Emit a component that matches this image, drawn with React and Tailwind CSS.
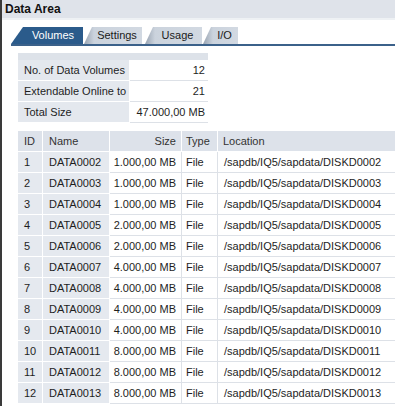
const rows = [
  [1, "DATA0002", "1.000,00 MB", "DISKD0002"],
  [2, "DATA0003", "1.000,00 MB", "DISKD0003"],
  [3, "DATA0004", "1.000,00 MB", "DISKD0004"],
  [4, "DATA0005", "2.000,00 MB", "DISKD0005"],
  [5, "DATA0006", "2.000,00 MB", "DISKD0006"],
  [6, "DATA0007", "4.000,00 MB", "DISKD0007"],
  [7, "DATA0008", "4.000,00 MB", "DISKD0008"],
  [8, "DATA0009", "4.000,00 MB", "DISKD0009"],
  [9, "DATA0010", "4.000,00 MB", "DISKD0010"],
  [10, "DATA0011", "8.000,00 MB", "DISKD0011"],
  [11, "DATA0012", "8.000,00 MB", "DISKD0012"],
  [12, "DATA0013", "8.000,00 MB", "DISKD0013"],
];

const summary = [
  ["No. of Data Volumes", "12"],
  ["Extendable Online to", "21"],
  ["Total Size", "47.000,00 MB"],
];

const Tab = ({ label, active, width, className = "" }) => (
  <div
    className={`flex h-[17px] items-center justify-center ${
      active
        ? "bg-[#2b5b8b] pl-[12px] text-white [clip-path:polygon(0_100%,12px_0,100%_0,100%_100%)]"
        : "bg-[linear-gradient(to_right,#98a3b1,#cbd3dd_10px,#d2d9e2)] pl-[8px] text-[#1a1a1a] [clip-path:polygon(0_100%,8px_0,100%_0,100%_100%)]"
    } ${className}`}
    style={{ width }}
  >
    {label}
  </div>
);

export default function App() {
  return (
    <div className="h-[406px] w-[395px] overflow-hidden bg-white text-[11px] leading-none text-[#1e1e1e] [font-family:'Liberation_Sans',Arial,sans-serif]">
      <div className="flex h-full flex-col border-l-2 border-[#3a3a3a]">
        <div className="flex h-[18px] items-center bg-[#dfe3ea] pl-[3px] text-[12px] font-bold text-[#111]">
          Data Area
        </div>
        <div className="h-[2px] bg-[#eef1f4]" />

        <div className="mt-[7px] flex pl-[9px]">
          <Tab label="Volumes" active width={72} />
          <Tab label="Settings" width={58} className="ml-px" />
          <Tab label="Usage" width={57} className="ml-[3px]" />
          <Tab label="I/O" width={35} className="ml-px" />
        </div>
        <div className="ml-[9px] h-[2px] bg-[#3b618a]" />

        <div className="ml-4 mt-[7px] w-[190px]">
          <div className="h-[7px] bg-[#dde2e9]" />
          {summary.map(([label, value]) => (
            <div key={label} className="flex h-[21px] whitespace-nowrap">
              <div className="flex w-[112px] items-center border-b border-r border-white bg-[#e4e8ee] pl-[6px]">
                {label}
              </div>
              <div className="flex flex-1 items-center justify-end border-b border-[#dde1e7] pr-[3px]">
                {value}
              </div>
            </div>
          ))}
        </div>

        <div className="ml-4 mt-[8px] w-[390px] whitespace-nowrap">
          <div className="flex h-[21px] bg-[#dde2ea] text-[#333]">
            <div className="flex w-[25px] items-center border-b border-r border-white pl-[6px]">ID</div>
            <div className="flex w-[67px] items-center border-b border-r border-white pl-[6px]">Name</div>
            <div className="flex w-[72px] items-center justify-end border-b border-r border-white pr-[5px]">Size</div>
            <div className="flex w-[36px] items-center border-b border-r border-white pl-[4px]">Type</div>
            <div className="flex flex-1 items-center border-b border-white pl-[5px]">Location</div>
          </div>
          {rows.map(([id, name, size, disk]) => (
            <div key={id} className="flex h-[21px]">
              <div className="flex w-[25px] items-center border-b border-r border-white bg-[#e5e9ef] pl-[6px]">{id}</div>
              <div className="flex w-[67px] items-center border-b border-r border-white bg-[#e5e9ef] pl-[6px]">{name}</div>
              <div className="flex w-[72px] items-center justify-end border-b border-r border-[#dde1e7] pr-[5px]">{size}</div>
              <div className="flex w-[36px] items-center border-b border-r border-[#dde1e7] pl-[4px]">File</div>
              <div className="flex flex-1 items-center border-b border-[#dde1e7] pl-[6px]">/sapdb/IQ5/sapdata/{disk}</div>
            </div>
          ))}
        </div>
      </div>
    </div>
  );
}
